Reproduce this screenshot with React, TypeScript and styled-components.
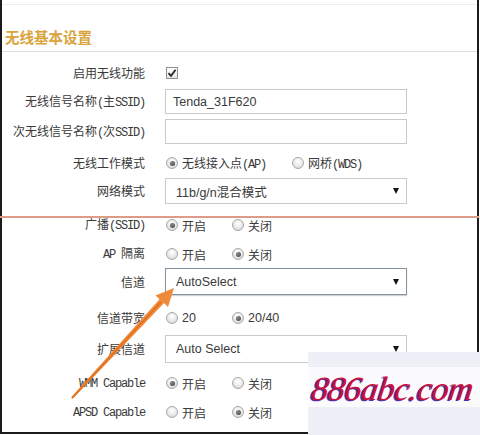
import React from "react";
import styled, { createGlobalStyle } from "styled-components";

const GlobalStyle = createGlobalStyle`
  html, body {
    margin: 0;
    padding: 0;
    background: #fff;
  }
  body {
    font-family: "Noto Sans CJK SC", "Liberation Sans", sans-serif;
  }
`;

const Page = styled.div`
  position: relative;
  width: 480px;
  height: 435px;
  overflow: hidden;
  background: #fff;
`;

const Frame = styled.div`
  box-sizing: border-box;
  width: 479px;
  height: 434px;
  border-left: 2px solid #1b1b1b;
  border-right: 2px solid #1b1b1b;
  border-bottom: 2px solid #1b1b1b;
  padding-top: 4px;
`;

const Header = styled.div`
  box-sizing: border-box;
  height: 48px;
  display: flex;
  align-items: flex-end;
  padding: 0 0 4px 3px;
  border-top: 1px solid #ededed;
  border-bottom: 1px solid #dedede;
`;

const Title = styled.h1`
  margin: 0;
  font-size: 14.5px;
  line-height: 20px;
  font-weight: 700;
  color: #d9a43c;
  font-family: "Noto Sans CJK SC", sans-serif;
`;

const Divider = styled.div`
  height: 2px;
  margin-top: 12px;
  margin-left: -2px;
  margin-right: -2px;
  background: #de9c88;
`;

const Row = styled.div<{ $h: number; $mt: number }>`
  display: flex;
  align-items: center;
  height: ${(p) => p.$h}px;
  margin-top: ${(p) => p.$mt}px;
`;

const Label = styled.div`
  flex: none;
  width: 143px;
  margin-right: 20px;
  text-align: right;
  font-size: 12px;
  line-height: 16px;
  color: #3a3a3a;
  white-space: nowrap;
`;

const Mono = styled.span`
  font-family: "Liberation Mono", monospace;
  font-size: 12px;
  letter-spacing: -1.2px;
`;

const Sans = styled.span`
  font-family: "Liberation Sans", "Noto Sans CJK SC", sans-serif;
  font-size: 12.5px;
`;

const TextInput = styled.input`
  box-sizing: border-box;
  width: 242px;
  height: 25px;
  margin: 0;
  padding: 0 0 0 7px;
  border: 1px solid #cacaca;
  outline: none;
  font-family: "Liberation Sans", sans-serif;
  font-size: 12.5px;
  color: #3a3a3a;
  background: #fff;
`;

const Select = styled.div<{ $h: number; $focus?: boolean }>`
  box-sizing: border-box;
  width: 242px;
  height: ${(p) => p.$h}px;
  display: flex;
  align-items: center;
  justify-content: space-between;
  padding: 0 7px 0 10px;
  border: 1px solid ${(p) => (p.$focus ? "#83939f" : "#cacaca")};
  box-shadow: ${(p) => (p.$focus ? "0 1px 1px rgba(0,0,0,0.18)" : "none")};
  font-family: "Liberation Sans", "Noto Sans CJK SC", sans-serif;
  font-size: 12.5px;
  color: #3a3a3a;
`;

const Caret = styled.span`
  width: 0;
  height: 0;
  border-left: 3.5px solid transparent;
  border-right: 3.5px solid transparent;
  border-top: 6px solid #151515;
`;

const Options = styled.div`
  display: flex;
  align-items: center;
  padding-left: 1px;
`;

const Option = styled.label<{ $w: number }>`
  display: flex;
  align-items: center;
  gap: 4px;
  width: ${(p) => p.$w}px;
  font-size: 12px;
  color: #3a3a3a;
  white-space: nowrap;
`;

const Radio = styled.span<{ $on?: boolean }>`
  position: relative;
  box-sizing: border-box;
  flex: none;
  width: 12px;
  height: 12px;
  border-radius: 50%;
  border: 1px solid #a8a8a8;
  background: radial-gradient(circle at 50% 35%, #ffffff 0%, #e9e9e9 55%, #cfcfcf 100%);

  &::after {
    content: "";
    display: ${(p) => (p.$on ? "block" : "none")};
    position: absolute;
    left: 2.5px;
    top: 2.5px;
    width: 5px;
    height: 5px;
    border-radius: 50%;
    background: radial-gradient(circle at 40% 35%, #8a8a8a, #3c3c3c);
  }
`;

const CheckBox = styled.span`
  box-sizing: border-box;
  display: flex;
  align-items: center;
  justify-content: center;
  width: 12px;
  height: 12px;
  margin-left: 1px;
  border: 1px solid #8e8f8f;
  background: linear-gradient(#ffffff, #e4e4e4);
`;

const Overlay = styled.svg`
  position: absolute;
  left: 0;
  top: 0;
  pointer-events: none;
`;

const Watermark = styled.div`
  position: absolute;
  left: 308px;
  top: 352px;
  width: 172px;
  height: 83px;
  background: #edf0f6;
  display: flex;
  flex-direction: column;
  padding-top: 15px;
  box-sizing: border-box;
`;

const MarkBand = styled.div`
  height: 40px;
  background: #fbfbfd;
  display: flex;
  align-items: flex-end;
  padding-left: 4px;
`;

const MarkText = styled.span`
  font-family: "Liberation Serif", serif;
  font-style: italic;
  font-size: 34px;
  line-height: 37px;
  color: #cf1138;
  letter-spacing: -0.4px;
  text-shadow: -1.5px 1px 0 #4a33b0;
  transform: skewX(-8deg);
`;

const Check = () => (
  <svg width="10" height="10" viewBox="0 0 10 10">
    <path d="M1.5 5.2 L4 7.8 L8.6 1.8" fill="none" stroke="#262626" strokeWidth="1.8" />
  </svg>
);

export default function App() {
  return (
    <Page>
      <GlobalStyle />
      <Frame>
        <Header>
          <Title>无线基本设置</Title>
        </Header>

        <Row $h={28} $mt={7}>
          <Label>启用无线功能</Label>
          <CheckBox>
            <Check />
          </CheckBox>
        </Row>
        <Row $h={25} $mt={2}>
          <Label>
            无线信号名称<Mono>(</Mono>主<Mono>SSID)</Mono>
          </Label>
          <TextInput readOnly value="Tenda_31F620" />
        </Row>
        <Row $h={25} $mt={5}>
          <Label>
            次无线信号名称<Mono>(</Mono>次<Mono>SSID)</Mono>
          </Label>
          <TextInput readOnly value="" />
        </Row>
        <Row $h={20} $mt={9}>
          <Label>无线工作模式</Label>
          <Options>
            <Option $w={126}>
              <Radio $on />
              <span>
                无线接入点<Mono>(AP)</Mono>
              </span>
            </Option>
            <Option $w={100}>
              <Radio />
              <span>
                网桥<Mono>(WDS)</Mono>
              </span>
            </Option>
          </Options>
        </Row>
        <Row $h={26} $mt={5}>
          <Label>网络模式</Label>
          <Select $h={26}>
            <span>11b/g/n混合模式</span>
            <Caret />
          </Select>
        </Row>

        <Divider />

        <Row $h={14} $mt={0}>
          <Label>
            广播<Mono>(SSID)</Mono>
          </Label>
          <Options>
            <Option $w={66}>
              <Radio $on />
              <span>开启</span>
            </Option>
            <Option $w={60}>
              <Radio />
              <span>关闭</span>
            </Option>
          </Options>
        </Row>
        <Row $h={20} $mt={12}>
          <Label>
            <Mono>AP </Mono>隔离
          </Label>
          <Options>
            <Option $w={66}>
              <Radio />
              <span>开启</span>
            </Option>
            <Option $w={60}>
              <Radio $on />
              <span>关闭</span>
            </Option>
          </Options>
        </Row>
        <Row $h={27} $mt={4}>
          <Label>信道</Label>
          <Select $h={27} $focus>
            <span>AutoSelect</span>
            <Caret />
          </Select>
        </Row>
        <Row $h={20} $mt={13}>
          <Label>信道带宽</Label>
          <Options>
            <Option $w={66}>
              <Radio />
              <Sans>20</Sans>
            </Option>
            <Option $w={60}>
              <Radio $on />
              <Sans>20/40</Sans>
            </Option>
          </Options>
        </Row>
        <Row $h={28} $mt={7}>
          <Label>扩展信道</Label>
          <Select $h={28}>
            <span>Auto Select</span>
            <Caret />
          </Select>
        </Row>
        <Row $h={20} $mt={10}>
          <Label>
            <Mono>WMM Capable</Mono>
          </Label>
          <Options>
            <Option $w={66}>
              <Radio $on />
              <span>开启</span>
            </Option>
            <Option $w={60}>
              <Radio />
              <span>关闭</span>
            </Option>
          </Options>
        </Row>
        <Row $h={20} $mt={9}>
          <Label>
            <Mono>APSD Capable</Mono>
          </Label>
          <Options>
            <Option $w={66}>
              <Radio />
              <span>开启</span>
            </Option>
            <Option $w={60}>
              <Radio $on />
              <span>关闭</span>
            </Option>
          </Options>
        </Row>
      </Frame>

      <Overlay width="480" height="435" viewBox="0 0 480 435">
        <polygon
          points="174,288 168,307 164,303 72.8,398.8 71.2,397.2 159.6,299.2 155.5,295.6"
          fill="#ef8a3a"
        />
        <line x1="72" y1="398" x2="161" y2="302" stroke="#e2701f" strokeWidth="1.6" />
      </Overlay>

      <Watermark>
        <MarkBand>
          <MarkText>886abc.com</MarkText>
        </MarkBand>
      </Watermark>
    </Page>
  );
}
